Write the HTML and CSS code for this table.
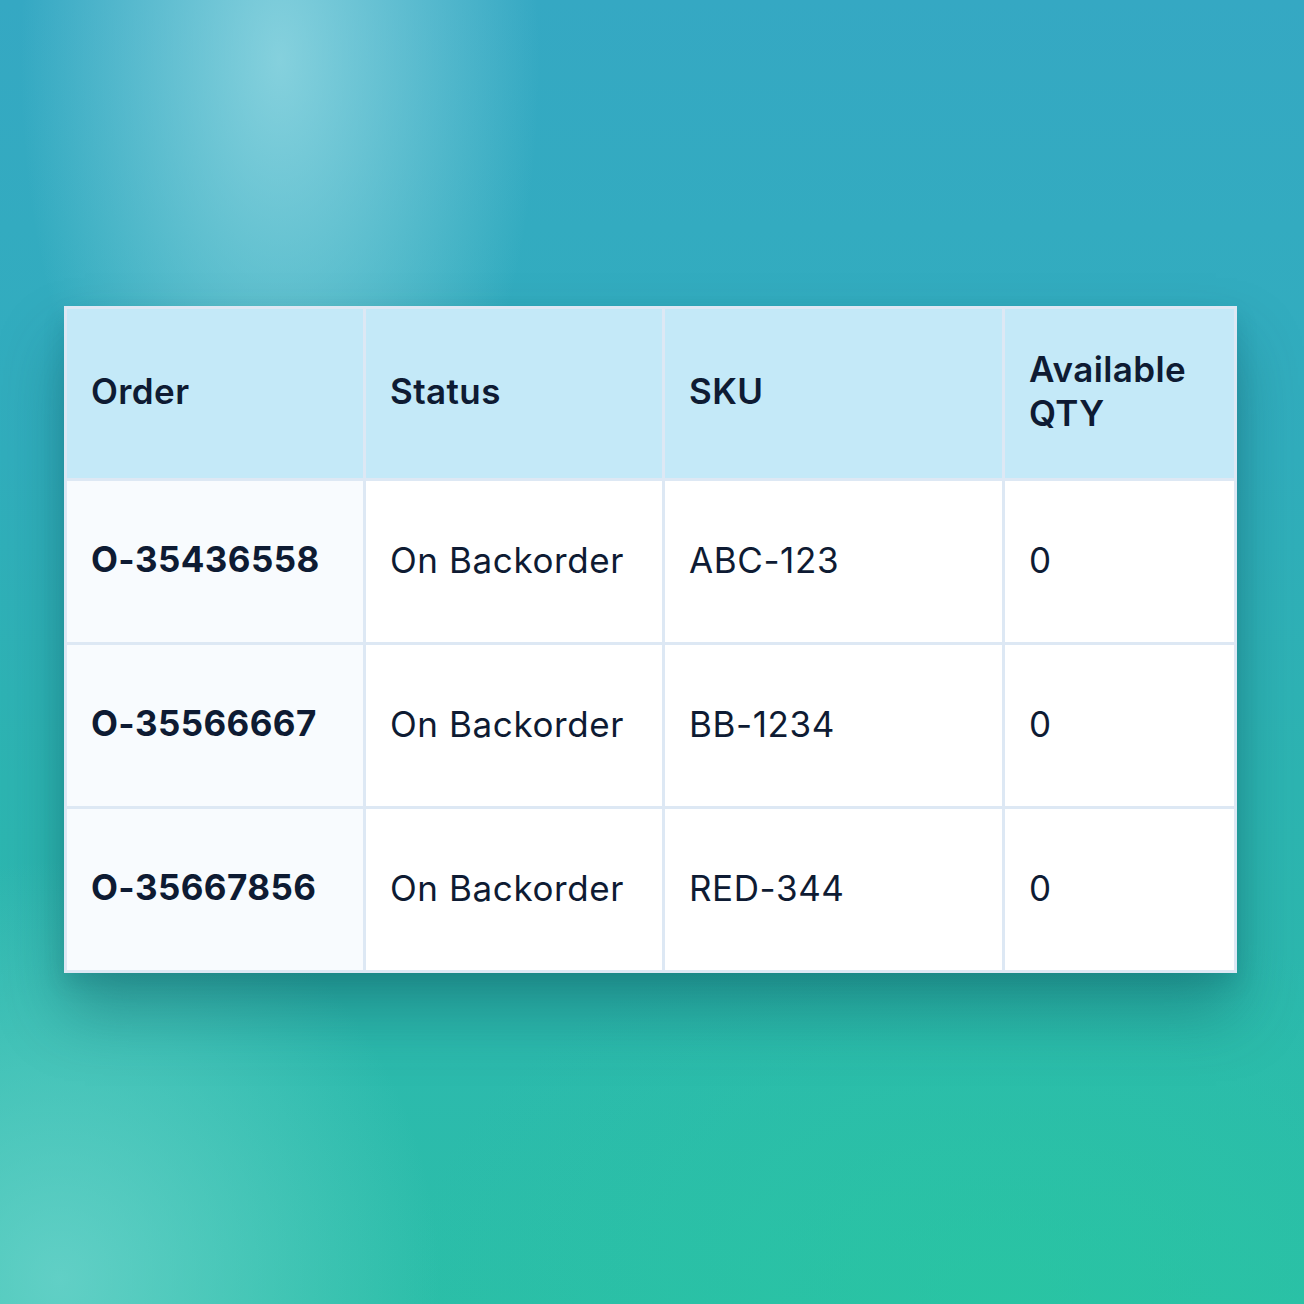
FILE: index.html
```html
<!DOCTYPE html>
<html lang="en">
<head>
<meta charset="utf-8">
<title>Backorders</title>
<link rel="stylesheet" href="styles.css">
</head>
<body>
<main class="stage">
  <div class="table">
    <div class="cell head">Order</div>
    <div class="cell head">Status</div>
    <div class="cell head">SKU</div>
    <div class="cell head">Available<br>QTY</div>

    <div class="cell first id">O-35436558</div>
    <div class="cell">On Backorder</div>
    <div class="cell">ABC-123</div>
    <div class="cell">0</div>

    <div class="cell first id">O-35566667</div>
    <div class="cell">On Backorder</div>
    <div class="cell">BB-1234</div>
    <div class="cell">0</div>

    <div class="cell first id">O-35667856</div>
    <div class="cell">On Backorder</div>
    <div class="cell">RED-344</div>
    <div class="cell">0</div>
  </div>
</main>
</body>
</html>
```
FILE: styles.css
```css
html, body {
  margin: 0;
  padding: 0;
}
body {
  width: 1304px;
  height: 1304px;
  overflow: hidden;
  font-family: "Inter", "Noto Sans", sans-serif;
  color: #0e1b33;
  background:
    radial-gradient(ellipse 260px 520px at 280px 60px, rgba(160, 222, 230, 0.75), rgba(160, 222, 230, 0) 100%),
    radial-gradient(ellipse 380px 420px at 60px 1280px, rgba(120, 215, 210, 0.7), rgba(120, 215, 210, 0) 100%),
    radial-gradient(ellipse 600px 400px at 1000px 1300px, rgba(40, 200, 160, 0.6), rgba(40, 200, 160, 0) 100%),
    linear-gradient(180deg, #35a8c3 0%, #31aebd 35%, #2db5b2 60%, #2bbea8 100%);
}
.stage {
  padding: 306px 67px 0 64px;
}
.table {
  display: grid;
  grid-template-columns: 296px 296px 337px 229px;
  grid-template-rows: 169px 161px 161px 161px;
  gap: 3px;
  padding: 3px;
  width: 1167px;
  background: #dde8f4;
  box-shadow: 0 40px 60px rgba(10, 70, 80, 0.35), 0 10px 20px rgba(10, 70, 80, 0.15);
}
.cell {
  display: flex;
  align-items: center;
  padding-left: 24px;
  padding-bottom: 4px;
  background: #ffffff;
  font-size: 35px;
  font-weight: 400;
  line-height: 44px;
  letter-spacing: 0.6px;
}
.cell.head {
  background: #c4e9f8;
  font-weight: 600;
  letter-spacing: 0.4px;
  padding-bottom: 6px;
}
.cell.first {
  background: #f8fbfe;
}
.cell.id {
  font-weight: 700;
  letter-spacing: 0.4px;
  padding-bottom: 6px;
}
```
